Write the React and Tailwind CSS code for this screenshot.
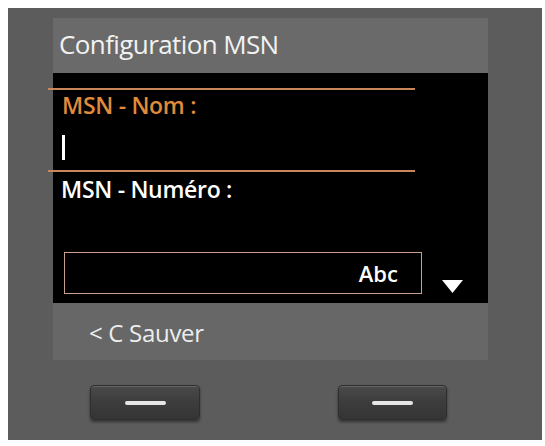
import React from 'react';

const font = { fontFamily: '"Open Sans", "Noto Sans", sans-serif' };

const SoftKey = ({ className = '' }) => (
  <div className={`flex h-[35px] items-center justify-center rounded-[4px] border border-[#2e2e2e] bg-gradient-to-b from-[#4a4a4a] via-[#3c3c3c] to-[#353535] shadow-[0_2px_3px_rgba(0,0,0,0.45),inset_0_1px_0_rgba(255,255,255,0.15)] ${className}`}>
    <div className="h-[4px] w-[41px] rounded-full bg-[#e6e6e6]" />
  </div>
);

export default function App() {
  return (
    <div className="h-[446px] w-[545px] bg-white pl-[8px] pt-[8px]" style={font}>
      <div className="flex h-[432px] w-[534px] flex-col bg-[#5c5c5c] pl-[45px] pt-[10px]">
        {/* display */}
        <div className="w-[435px]">
          <div className="h-[55px] bg-[#6a6a6a] pl-[6px] pt-[10px] text-[26px] leading-[32px] tracking-[-0.6px] text-[#f2f2f2]">
            Configuration MSN
          </div>

          <div className="flex h-[230px] flex-col bg-black">
            <div className="mt-[15px] -ml-[5px] h-[2px] w-[367px] bg-[#c8865a]" />
            <div className="mt-[2px] pl-[9px] text-[23px] font-semibold leading-[26px] tracking-[-0.3px] text-[#e08a3c]">
              MSN - Nom :
            </div>
            <div className="ml-[9px] mt-[17px] h-[25px] w-[3px] bg-white" />
            <div className="mt-[10px] -ml-[5px] h-[2px] w-[367px] bg-[#c8865a]" />
            <div className="mt-[4px] pl-[8px] text-[23px] font-semibold leading-[26px] tracking-[-0.3px] text-white">
              MSN - Numéro :
            </div>
            <div className="mt-[50px] flex items-end">
              <div className="ml-[11px] flex h-[42px] w-[358px] items-center justify-end border-[1.5px] border-[#c9a08e] pr-[23px] text-[22px] font-semibold leading-[26px] text-white">
                Abc
              </div>
              <svg className="mb-[1px] ml-[20px]" width="21" height="13" viewBox="0 0 21 13">
                <polygon points="0,0 21,0 10.5,13" fill="#ffffff" />
              </svg>
            </div>
          </div>

          <div className="h-[57px] bg-[#676767] pl-[36px] pt-[16px] text-[24px] leading-[28px] tracking-[-0.3px] text-[#ededed]">
            &lt; C Sauver
          </div>
        </div>

        {/* soft keys */}
        <div className="mt-[25px] flex pl-[37px]">
          <SoftKey className="w-[110px]" />
          <SoftKey className="ml-[138px] w-[109px]" />
        </div>
      </div>
    </div>
  );
}
